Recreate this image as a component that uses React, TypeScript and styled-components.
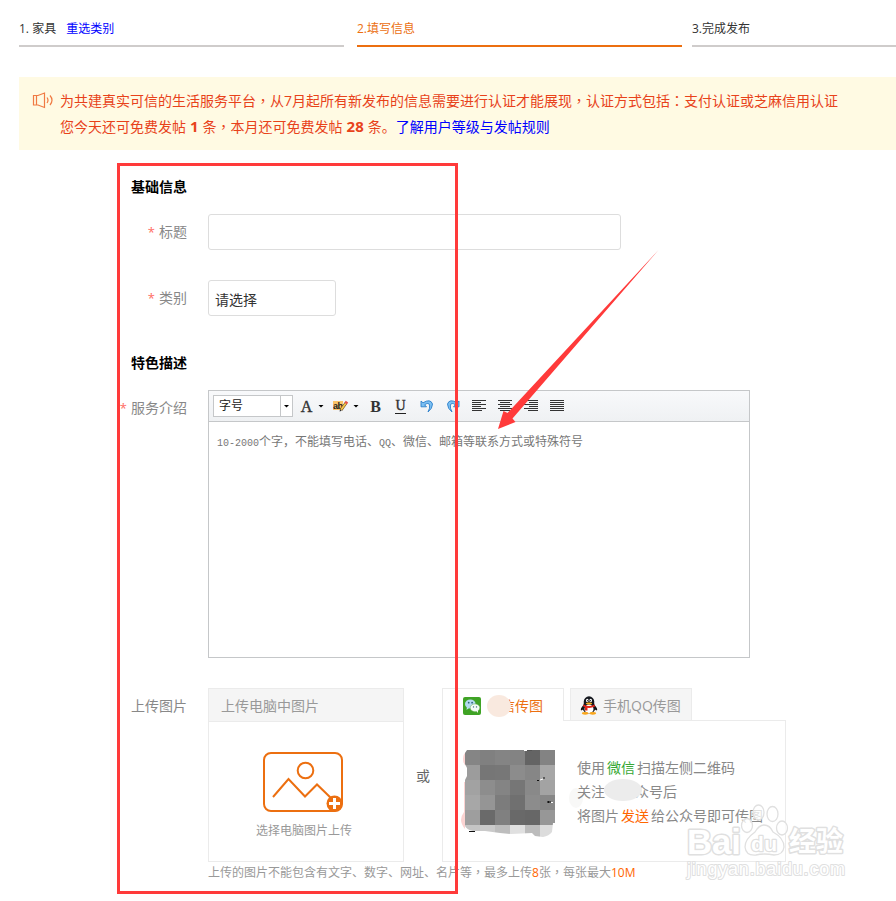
import React from "react";
import styled, { createGlobalStyle } from "styled-components";

const Global = createGlobalStyle`
  * { box-sizing: border-box; }
  html, body { margin: 0; padding: 0; background: #fff; overflow: hidden; }
  body { font-family: "Open Sans", "Noto Sans CJK SC", sans-serif; font-size: 14px; color: #333; }
`;

const Page = styled.main`
  position: relative;
  width: 896px;
  height: 901px;
  overflow: hidden;
  background: #fff;
`;

const Steps = styled.ol`
  display: flex;
  list-style: none;
  margin: 0 0 30px;
  padding: 0 0 0 19px;
`;

const Step = styled.li<{ $active?: boolean; $gap: number }>`
  flex: 0 0 325px;
  height: 47px;
  margin-right: ${(p) => p.$gap}px;
  padding-top: 19px;
  line-height: 20px;
  font-size: 12px;
  white-space: pre;
  color: ${(p) => (p.$active ? "#ec6f10" : "#333")};
  border-bottom: 2px solid ${(p) => (p.$active ? "#ec6f10" : "#cfcccb")};
`;

const Link = styled.a<{ $left?: number }>`
  color: #00f;
  margin-left: ${(p) => p.$left ?? 0}px;
`;

const Notice = styled.section`
  display: flex;
  margin-left: 19px;
  height: 73px;
  padding: 10px 0 0 13px;
  background: #fffae3;
  color: #e8421a;
  white-space: nowrap;
  svg { margin: 5px 6px 0 0; flex: none; }
`;

const NoticeLine = styled.div`
  height: 26px;
  line-height: 26px;
`;

const Centered = styled.span`
  font-family: "Noto Sans CJK TC", sans-serif;
`;

const Count = styled.b`
  font-family: "Noto Sans", sans-serif;
  font-size: 15px;
  line-height: 20px;
  margin: 0 4px;
`;

const SectionTitle = styled.h2<{ $top: number; $bottom: number }>`
  margin: ${(p) => p.$top}px 0 ${(p) => p.$bottom}px 131px;
  font-size: 14px;
  line-height: 20px;
  font-weight: 700;
  color: #000;
`;

const Row = styled.div<{ $gap?: number }>`
  display: grid;
  grid-template-columns: 187px 1fr;
  column-gap: 21px;
  margin-bottom: ${(p) => p.$gap ?? 0}px;
`;

const Label = styled.label`
  text-align: right;
  color: #888;
  line-height: 20px;
  padding-top: 8px;
  i { font-style: normal; color: #ff6b62; margin-right: 4px; font-size: 13px; }
`;

const Field = styled.div<{ $width: number }>`
  width: ${(p) => p.$width}px;
  height: 36px;
  padding: 3px 6px 0;
  line-height: 32px;
  border: 1px solid #ddd;
  border-radius: 3px;
`;

const Editor = styled.div`
  width: 542px;
  height: 268px;
  border: 1px solid #c5c7c9;
`;

const Toolbar = styled.div`
  display: flex;
  align-items: center;
  height: 31px;
  padding-left: 4px;
  border-bottom: 1px solid #c5c7c9;
  background: linear-gradient(#f8f9fb, #eff1f3);
`;

const SizeSelect = styled.div`
  display: flex;
  width: 80px;
  height: 22px;
  border: 1px solid #c5c7c9;
  background: #fff;
  font-size: 12px;
  line-height: 20px;
  color: #222;
  span { flex: 1; padding-left: 5px; }
`;

const SelectArrow = styled.div`
  width: 12px;
  border-left: 1px solid #c5c7c9;
  display: flex;
  align-items: center;
  justify-content: center;
`;

const Caret = styled.div<{ $left?: number }>`
  flex: none;
  width: 6px;
  height: 3px;
  margin-left: ${(p) => p.$left ?? 0}px;
  background: #000;
  clip-path: polygon(0 0, 100% 0, 50% 100%);
`;

const Glyph = styled.span<{ $left: number; $width: number; $underline?: boolean; $bold?: boolean }>`
  width: ${(p) => p.$width}px;
  margin-left: ${(p) => p.$left}px;
  font: ${(p) => (p.$bold ? 700 : 400)} 16px/17px "Liberation Serif", serif;
  -webkit-text-stroke: ${(p) => (p.$bold ? 0 : 0.4)}px #333;
  color: #333;
  text-align: center;
  border-bottom: ${(p) => (p.$underline ? "1px solid #222" : "0")};
  ${(p) => (p.$underline ? "height:15px; line-height:14px; font-size:14px;" : "")}
`;

const ToolIcon = styled.svg<{ $left: number }>`
  margin-left: ${(p) => p.$left}px;
  flex: none;
`;

const EditorText = styled.div`
  padding: 10px 8px;
  font-size: 12px;
  line-height: 20px;
  color: #777;
  white-space: nowrap;
  span { font: 10px "Liberation Mono", monospace; }
`;

const UploadRow = styled.div`
  display: flex;
`;

const LocalCard = styled.div`
  width: 196px;
  height: 174px;
  border: 1px solid #ebebeb;
  text-align: center;
  font-size: 12px;
  color: #999;
  svg { display: block; margin: 29px auto 0 53px; }
  p { margin: 8px 0 0 -4px; line-height: 20px; }
`;

const CardHeader = styled.div`
  height: 33px;
  padding-left: 12px;
  text-align: left;
  font-size: 14px;
  line-height: 34px;
  background: #f5f5f5;
  border-bottom: 1px solid #ebebeb;
`;

const Or = styled.span`
  width: 38px;
  text-align: center;
  padding-top: 78px;
  line-height: 20px;
  color: #666;
`;

const MobileCard = styled.div`
  width: 344px;
`;

const Tabs = styled.div`
  display: flex;
  gap: 6px;
`;

const Tab = styled.div<{ $active?: boolean }>`
  position: relative;
  display: flex;
  align-items: center;
  width: 122px;
  height: ${(p) => (p.$active ? 33 : 32)}px;
  margin-bottom: ${(p) => (p.$active ? -1 : 0)}px;
  padding-left: ${(p) => (p.$active ? 20 : 9)}px;
  gap: ${(p) => (p.$active ? 6 : 5)}px;
  border: 1px solid #ebebeb;
  border-bottom: 0;
  background: ${(p) => (p.$active ? "#fff" : "#f5f5f5")};
  color: ${(p) => (p.$active ? "#ec6f10" : "#999")};
  z-index: ${(p) => (p.$active ? 1 : 0)};
  span { margin-top: ${(p) => (p.$active ? -1 : 0)}px; white-space: nowrap; }
  svg { flex: none; margin-top: 2px; }
`;

const Blob = styled.i<{ $x: number; $y: number; $w: number; $h: number; $color: string }>`
  position: absolute;
  left: ${(p) => p.$x}px;
  top: ${(p) => p.$y}px;
  width: ${(p) => p.$w}px;
  height: ${(p) => p.$h}px;
  border-radius: 50%;
  background: ${(p) => p.$color};
`;

const TabPanel = styled.div`
  display: flex;
  height: 142px;
  padding: 28px 0 0 17px;
  border: 1px solid #ebebeb;
`;

const Instructions = styled.div`
  position: relative;
  margin: 7px 0 0 17px;
  line-height: 24px;
  color: #888;
  white-space: nowrap;
  p { margin: 0; position: relative; }
`;

const Gap = styled.span<{ $width: number }>`
  display: inline-block;
  width: ${(p) => p.$width}px;
`;

const Accent = styled.span<{ $green?: boolean; $pad?: number }>`
  color: ${(p) => (p.$green ? "#36a834" : "#f60")};
  margin: 0 ${(p) => p.$pad ?? 0}px;
`;

const Hint = styled.p`
  margin: 0 0 0 208px;
  font-size: 12px;
  line-height: 20px;
  color: #999;
`;

const RedFrame = styled.div`
  position: absolute;
  left: 117px;
  top: 163px;
  width: 341px;
  height: 731px;
  border: 3px solid #ff3a3a;
  z-index: 3;
`;

const Overlay = styled.svg<{ $x: number; $y: number }>`
  position: absolute;
  left: ${(p) => p.$x}px;
  top: ${(p) => p.$y}px;
  z-index: 3;
`;

const Speaker = () => (
  <svg width="22" height="17" viewBox="0 0 22 17" fill="none" stroke="#f07a43" strokeWidth="1.2">
    <path d="M1.500 3.500H6L12.500 1V15.500L6 13H1.500ZM4.500 3.500V13" />
    <path d="M15 5.500Q17 8.200 15 11M18 3.500Q22 8.200 18 13" />
  </svg>
);

const Highlighter = () => (
  <ToolIcon $left={9} width="16" height="14" viewBox="0 0 16 14">
    <rect y="2" width="10" height="9" fill="#fbc468" />
    <text x="0" y="9.500" fontSize="9" fontWeight="700" fontFamily="Liberation Sans, sans-serif" letterSpacing="-.6" fill="#222">ab</text>
    <path d="M8 11L13 4" stroke="#6b4a20" strokeWidth="3" />
    <path d="M8.200 10.600L13 4" stroke="#f5c64a" strokeWidth="1.800" />
    <path d="M12.600 4.500L14 2.600" stroke="#e5534a" strokeWidth="3" />
    <path d="M6.600 12.600L7 10.500L8.600 11.700Z" fill="#222" />
  </ToolIcon>
);

const Turn = ({ flip, left }: { flip?: boolean; left: number }) => (
  <ToolIcon $left={left} width="14" height="14" viewBox="0 0 14 14">
    <g transform={flip ? "translate(14 0) scale(-1 1)" : undefined}>
      <path
        d="M1 2V7.800H6.500L4.600 5.800Q8.500 3 9.600 6Q10.200 9 8 13Q12.500 9.500 12.500 5Q10.500 -.8 3 3.800Z"
        fill="#7cc0f3"
        stroke="#2d7fc9"
        strokeWidth=".9"
      />
    </g>
  </ToolIcon>
);

const alignments: [number, number][][] = [
  [[0, 14], [0, 9], [0, 14], [0, 9], [0, 14], [0, 10]],
  [[0, 14], [2, 10], [0, 14], [2, 10], [0, 14], [2, 10]],
  [[0, 14], [5, 9], [0, 14], [5, 9], [0, 14], [4, 10]],
  [[0, 14], [0, 14], [0, 14], [0, 14], [0, 14], [0, 14]],
];

const PictureIcon = () => (
  <svg width="82" height="62" viewBox="0 0 82 62" fill="none" stroke="#ec6f10" strokeWidth="2">
    <rect x="2" y="2" width="78" height="58" rx="7" />
    <circle cx="43.500" cy="19.500" r="7.800" />
    <path d="M11 46L26.500 28L43 45.500L55 33.500L70 48" />
    <circle cx="72.500" cy="52.500" r="8" fill="#ec6f10" stroke="none" />
    <path d="M72.500 47V58M67 52.500H78" stroke="#fff" strokeWidth="3" />
  </svg>
);

const WechatIcon = () => (
  <svg width="18" height="18" viewBox="0 0 18 18">
    <rect width="18" height="18" rx="2" fill="#3fa325" />
    <path d="M4 10L3.500 13L6 11Z" fill="#c2e4f4" />
    <ellipse cx="7.300" cy="7" rx="5.300" ry="4.600" fill="#b4daf0" />
    <ellipse cx="12" cy="10.800" rx="4.800" ry="3.900" fill="#f5fbf7" stroke="#62aa51" strokeWidth=".5" />
    <path d="M13 13.500L15 16L15 13Z" fill="#f5fbf7" />
    <g fill="#2e6478">
      <circle cx="5.700" cy="5.700" r=".9" /><circle cx="9.100" cy="5.700" r=".9" />
      <circle cx="10.500" cy="9.900" r=".7" /><circle cx="13.500" cy="9.900" r=".7" />
    </g>
  </svg>
);

const QQIcon = () => (
  <svg width="18" height="19" viewBox="0 0 18 19">
    <path d="M4 9Q0 12 1 14.500Q3 14 4 12ZM14 9Q18 12 17 14.500Q15 14 14 12Z" fill="#111" />
    <ellipse cx="9" cy="11.500" rx="6.500" ry="6" fill="#15181f" />
    <ellipse cx="9" cy="6" rx="5.300" ry="5.700" fill="#15181f" />
    <ellipse cx="9" cy="13" rx="4.500" ry="4.400" fill="#fff" />
    <ellipse cx="5.200" cy="17.300" rx="3.300" ry="1.400" fill="#f9a61c" />
    <ellipse cx="12.800" cy="17.300" rx="3.300" ry="1.400" fill="#f9a61c" />
    <ellipse cx="7.300" cy="4.500" rx="1.300" ry="1.800" fill="#fff" />
    <ellipse cx="10.700" cy="4.500" rx="1.300" ry="1.800" fill="#fff" />
    <circle cx="7.700" cy="4.700" r=".6" /><circle cx="10.300" cy="4.700" r=".6" />
    <ellipse cx="9" cy="7.500" rx="3.200" ry="1" fill="#f9b01c" />
    <path d="M3.500 8.500Q9 11.500 14.500 8.500L15 10.500Q11 12.300 7.500 11.800V14.500H5V11Q3.500 10.800 3 10Z" fill="#e32419" />
  </svg>
);

const shades = [
  ["#858585", "#808080", "#848484", "#838383", "#646464", "#838383"],
  ["#9c9c9c", "#767676", "#777777", "#8c8c8c", "#868686", "#a7a7a7"],
  ["#a2a2a2", "#8d8d8d", "#848484", "#767676", "#898989", "#a3a3a3"],
  ["#a7a7a7", "#959595", "#7c7c7c", "#707070", "#8c8c8c", "#878787"],
  ["#9e9e9e", "#6a6a6a", "#808080", "#696969", "#676767", "#979797"],
  ["#c5c5c5", "#cacaca", "#bdbdbd", "#e0e0e0", "#bcbcbc", "#dcdcdc"],
];

const Mosaic = () => (
  <svg width="100" height="90" viewBox="-5 -1 100 90">
    <defs>
      <clipPath id="mosaic">
        <path d="M2 0H90V73H88L87 82Q84 86 78 87L70 86L67 83L46 84L35 83L20 81L8 81Q2 80 0 76V30L2 26V18L0 14V3Z" />
      </clipPath>
    </defs>
    <path d="M2 2Q-2 3 -2 9T2 16ZM0 32H-1V62Q-4 66 -4 70T0 79Z" fill="#fbd3d2" />
    <g clipPath="url(#mosaic)" shapeRendering="crispEdges">
      {shades.map((row, y) =>
        row.map((c, x) => <rect key={`${x}-${y}`} x={x * 15} y={y * 15} width="15" height="15" fill={c} />)
      )}
    </g>
    <path d="M72 30.500H74M78 28H80M82 52H86M83.500 51V53M4 81.500H10" stroke="#111" strokeWidth="1.200" />
    <path d="M62 .5H67" stroke="#555" />
    <path d="M75 30L78 29M86 52.500H88M59 .5H62" stroke="#fff" />
  </svg>
);

const Watermark = () => (
  <Overlay $x={680} $y={798} width="175" height="90" viewBox="0 0 175 90">
    <g fill="#fff" fillOpacity=".75" stroke="#e0e0e0" strokeWidth="1.300" strokeLinejoin="round">
      <ellipse cx="78.500" cy="14.500" rx="5.500" ry="7.500" />
      <ellipse cx="92.500" cy="16" rx="5.500" ry="7.500" />
      <ellipse cx="67" cy="27.500" rx="5.500" ry="7" />
      <ellipse cx="102" cy="30" rx="5.500" ry="7" />
      <path d="M84 27Q90 27 93 34Q104 40 104 49Q103 57 94 57Q84 55 76 57Q66 58 65 49Q65 41 75 34Q79 27 84 27Z" />
    </g>
    <g fill="#fff" stroke="#e0e0e0" strokeWidth="3" paintOrder="stroke" strokeLinejoin="round" fontFamily="Liberation Sans, sans-serif">
      <text x="7" y="56" fontSize="35" fontWeight="700" textLength="54" lengthAdjust="spacingAndGlyphs">Bai</text>
      <text x="71" y="53" fontSize="21" fontWeight="700" textLength="26" strokeWidth="2.500">du</text>
      <text x="109" y="53" fontSize="27" fontWeight="700" textLength="54" fontFamily="Noto Sans CJK SC, sans-serif">经验</text>
      <text x="7" y="77" fontSize="18" textLength="158" lengthAdjust="spacing" strokeWidth="2">jingyan.baidu.com</text>
    </g>
  </Overlay>
);

const Comma = () => <Centered lang="zh-TW">，</Centered>;

export default function App() {
  return (
    <Page lang="zh-CN">
      <Global />
      <Steps>
        <Step $gap={13}>1. 家具<Link $left={10}>重选类别</Link></Step>
        <Step $active $gap={10}>2.填写信息</Step>
        <Step $gap={0}>3.完成发布</Step>
      </Steps>

      <Notice>
        <Speaker />
        <div>
          <NoticeLine>
            为共建真实可信的生活服务平台<Comma />从7月起所有新发布的信息需要进行认证才能展现<Comma />认证方式包括<Centered lang="zh-TW">：</Centered>支付认证或芝麻信用认证
          </NoticeLine>
          <NoticeLine>
            您今天还可免费发帖<Count>1</Count>条<Comma />本月还可免费发帖<Count>28</Count>条。<Link>了解用户等级与发帖规则</Link>
          </NoticeLine>
        </div>
      </Notice>

      <SectionTitle $top={27} $bottom={17}>基础信息</SectionTitle>
      <Row $gap={30}>
        <Label><i>*</i>标题</Label>
        <Field $width={413} />
      </Row>
      <Row>
        <Label><i>*</i>类别</Label>
        <Field $width={128}>请选择</Field>
      </Row>

      <SectionTitle $top={37} $bottom={17}>特色描述</SectionTitle>
      <Row $gap={30}>
        <Label><i>*</i>服务介绍</Label>
        <Editor>
          <Toolbar>
            <SizeSelect>
              <span>字号</span>
              <SelectArrow><Caret /></SelectArrow>
            </SizeSelect>
            <Glyph $left={7} $width={13}>A</Glyph>
            <Caret $left={5} />
            <Highlighter />
            <Caret $left={4} />
            <Glyph $left={11} $width={11} $bold>B</Glyph>
            <Glyph $left={14} $width={11} $underline>U</Glyph>
            <Turn left={14} />
            <Turn left={12} flip />
            {alignments.map((bars, i) => (
              <ToolIcon key={i} $left={12} width="14" height="12" shapeRendering="crispEdges">
                {bars.map(([x, w], y) => (
                  <rect key={y} x={x} y={y * 2} width={w} height="1" fill="#333" />
                ))}
              </ToolIcon>
            ))}
          </Toolbar>
          <EditorText>
            <span>10-2000</span>个字，不能填写电话、<span>QQ</span>、微信、邮箱等联系方式或特殊符号
          </EditorText>
        </Editor>
      </Row>

      <Row>
        <Label>上传图片</Label>
        <UploadRow>
          <LocalCard>
            <CardHeader>上传电脑中图片</CardHeader>
            <PictureIcon />
            <p>选择电脑图片上传</p>
          </LocalCard>
          <Or>或</Or>
          <MobileCard>
            <Tabs>
              <Tab $active>
                <WechatIcon />
                <Gap $width={8} />
                <span>信传图</span>
                <Blob $x={44} $y={6} $w={24} $h={22} $color="#f9e9df" />
              </Tab>
              <Tab>
                <QQIcon />
                <span>手机QQ传图</span>
              </Tab>
            </Tabs>
            <TabPanel>
              <Mosaic />
              <Instructions>
                <Blob $x={-8} $y={32} $w={14} $h={20} $color="#f8f8f7" />
                <p>使用<Accent $green $pad={2}>微信</Accent>扫描左侧二维码</p>
                <p>
                  关注<Gap $width={30} />众号后
                  <Blob $x={27} $y={-1} $w={38} $h={22} $color="#ececec" />
                </p>
                <p>将图片<Accent $pad={2}>发送</Accent>给公众号即可传图</p>
              </Instructions>
            </TabPanel>
          </MobileCard>
        </UploadRow>
      </Row>
      <Hint>
        上传的图片不能包含有文字、数字、网址、名片等<Comma />最多上传<Accent>8</Accent>张<Comma />每张最大<Accent>10M</Accent>
      </Hint>

      <RedFrame />
      <Overlay $x={490} $y={245} width="175" height="190" viewBox="0 0 175 190">
        <path d="M168.500 5L17.500 168L13.500 166L8 184L25.500 177L22.500 173.500Z" fill="#ff3a3a" />
      </Overlay>
      <Watermark />
    </Page>
  );
}
